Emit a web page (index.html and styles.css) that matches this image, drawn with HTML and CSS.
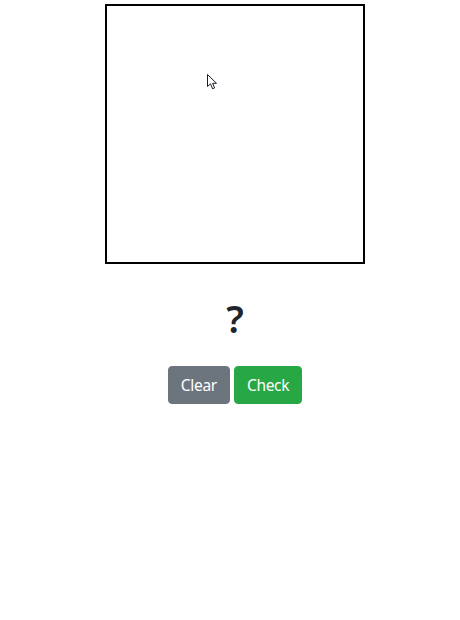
FILE: index.html
```html
<!DOCTYPE html>
<html>
<head>
<meta charset="utf-8">
<link rel="stylesheet" href="styles.css">
</head>
<body>
<div class="app">
  <div class="board">
    <svg class="cursor" width="12" height="17" viewBox="0 0 12 17">
      <path d="M0.5 0.5 L0.5 12.5 L3.5 9.8 L5.6 14.8 L7.6 13.9 L5.6 9.3 L9.5 9.3 Z" fill="#fff" stroke="#1a1a2a" stroke-width="1" stroke-linejoin="miter"/>
    </svg>
  </div>
  <h1 class="answer">?</h1>
  <div class="actions">
    <button class="btn btn-clear">Clear</button>
    <button class="btn btn-check">Check</button>
  </div>
</div>
</body>
</html>
```
FILE: styles.css
```css
html, body {
  margin: 0;
  padding: 0;
  background: #fff;
}
body {
  font-family: "Noto Sans", "Open Sans", Arial, sans-serif;
  color: #212529;
}
.app {
  display: flex;
  flex-direction: column;
  align-items: center;
  padding: 4px 0 0 10px;
}
.board {
  position: relative;
  width: 256px;
  height: 256px;
  border: 2px solid #000;
  background: #fff;
}
.cursor {
  position: absolute;
  left: 100px;
  top: 68px;
}
.answer {
  margin: 30px 0 24px;
  font-size: 38px;
  line-height: 48px;
  font-weight: 600;
}
.actions {
  display: flex;
  gap: 4px;
}
.btn {
  font-family: inherit;
  font-size: 15.5px;
  letter-spacing: -0.3px;
  line-height: 24px;
  padding: 6px 12px;
  border: 1px solid transparent;
  border-radius: 4px;
  color: #fff;
  cursor: pointer;
}
.btn-clear {
  background: #6c757d;
  border-color: #6c757d;
}
.btn-check {
  background: #28a745;
  border-color: #28a745;
}
```
